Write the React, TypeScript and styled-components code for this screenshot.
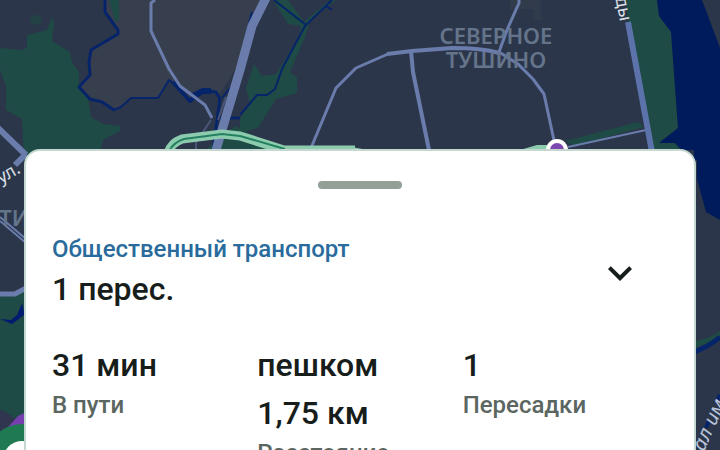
import React, { useState } from 'react';
import styled, { createGlobalStyle } from 'styled-components';

const GlobalStyle = createGlobalStyle`
  * { box-sizing: border-box; }
  body {
    margin: 0;
    background: #2c364a;
    font-family: Roboto, "Noto Sans", sans-serif;
  }
`;

const Screen = styled.main`
  position: relative;
  height: 100vh;
  overflow: hidden;
`;

const MapCanvas = styled.svg`
  position: absolute;
  inset: 0;
  width: 100%;
  height: 100%;
`;

const Sheet = styled.section`
  position: relative;
  margin: 149px 24px 0;
  padding: 30px 26px 32px;
  border: 2px solid #c5d8d0;
  border-radius: 16px;
  background: #fefffe;
`;

const Handle = styled.div`
  width: 84px;
  height: 8px;
  margin: 0 auto 44px;
  border-radius: 4px;
  background: #92a098;
`;

const Header = styled.header`
  display: flex;
  align-items: center;
  justify-content: space-between;
  margin-bottom: 28px;
`;

const Label = styled.div<{ $accent?: boolean }>`
  color: ${(p) => (p.$accent ? '#296b9c' : '#5b6661')};
  font-size: 24px;
  font-weight: 500;
  line-height: 32px;
`;

const Title = styled.h1`
  margin: 0;
  color: #171d1a;
  font-size: 32px;
  font-weight: 500;
  line-height: 48px;
`;

const ToggleButton = styled.button<{ $open: boolean }>`
  display: grid;
  place-items: center;
  width: 96px;
  height: 80px;
  padding: 0;
  border: 0;
  background: none;
  color: #171d1a;
  cursor: pointer;
  svg { transform: ${(p) => (p.$open ? 'none' : 'rotate(180deg)')}; }
`;

const Stats = styled.dl`
  display: grid;
  grid-template-columns: repeat(3, minmax(0, 1fr));
  margin: 0;
`;

const Stat = styled.div`
  display: flex;
  flex-direction: column-reverse;
  justify-content: flex-end;
`;

const StatValue = styled.dd`
  margin: 0;
  color: #171d1a;
  font-size: 32px;
  font-weight: 500;
  line-height: 48px;
`;

const ValueLine = styled.span`
  display: block;
`;

const stats = [
  { value: ['31 мин'], label: 'В пути' },
  { value: ['пешком', '1,75 км'], label: 'Расстояние' },
  { value: ['1'], label: 'Пересадки' },
];

function CityMap() {
  const river = '#06246a';
  const park = '#1e4b45';
  const road = '#6a7cab';
  return (
    <MapCanvas viewBox="0 0 720 450" preserveAspectRatio="xMidYMin slice" aria-label="Карта">
      <rect width="720" height="450" fill="#2c364a" />
      <path fill="#373f4e" d="M105 0L105 12L118 30V34L91 50L89 62L90 75L79 87L90 99L102 103L114 110L121 107L131 98H158L170 80L190 98L200 89L219 95L240 62L264 0Z" />
      <path fill="#323b4c" d="M510 0H541V20H533V9H510Z" />
      <g fill={park}>
        <path d="M0 48L20 50L27 48V35L47 30L52 17L54 24L52 41L70 52L72 62L79 72L79 87L88 98L91 117L103 124L120 126V131L103 140L98 160H24L22 119L6 110V86L0 70Z" />
        <path d="M109 0H119V21H115Z" />
        <ellipse cx="36" cy="20" rx="6" ry="5" opacity="0.6" />
        <path d="M273 0H288L304 22L330 0H336L310 20L305 37L290 72L297 78V93L276 99L258 128L240 133V119L250 103L246 88L254 64L262 76L276 74L299 37L301 26L288 24Z" />
        <path d="M626 0H657L659 16L671 32L678 128L659 143H674L682 150H652L628 22Z" />
        <path d="M565 141L638 122L644 127L574 146Z" />
        <path d="M205 150L235 126L275 146V150Z" />
        <path d="M0 297L24 290V418H0Z" />
        <path d="M690 342Q710 339 720 331V338L690 350Z" />
      </g>
      <path fill="#001b5b" d="M657 0H702L720 48V220L706 212L694 187V150H681L675 143H659L678 128L671 32L659 16Z" />
      <path fill="#2b3547" d="M694 162L697 160V179L706 212L690 200Z" />
      <g fill="none" stroke={river} strokeLinejoin="round">
        <path strokeWidth="3" d="M105 0V12L118 30V34L91 50L89 62L90 75L79 87L90 99L102 102L114 110" />
        <path strokeWidth="2" d="M101 101L114 110L121 107L131 98H158L169 80L178 87" />
        <path strokeWidth="4" d="M173 82L190 101L203 90" />
        <path strokeWidth="3" d="M203 90L216 92L220 99L213 150M218 118H240" />
        <path strokeWidth="6" d="M191 97L203 91L211 91" />
        <path strokeWidth="2" d="M274 0L306 25M332 0L305 26L282 69L275 89L267 95H257L240 115M326 6L332 10M222 98L230 88M252 12L246 36" />
        <path strokeWidth="5" d="M690 354Q710 346 720 337" />
        <path strokeWidth="4" strokeDasharray="7 22" d="M706 428L721 392" />
      </g>
      <path fill="#001b70" d="M0 319L11 320L17 315L22 303L24 312V315L12 324Z" />
      <g fill="none" stroke={road} strokeLinejoin="round">
        <path stroke="#4a5675" strokeWidth="2" d="M211 120L196 142V150M226 97L218 120" />
        <path strokeWidth="3" d="M155 0L151 3V31L169 69L180 86L205 105L212 118" />
        <path strokeWidth="9" d="M267 -4L252 26L240 70L216 150" />
        <path strokeWidth="3" d="M311 148L336 88L356 68L388 54" />
        <path strokeWidth="4" d="M387 54L412 51L452 48Q482 48 499 53" />
        <path strokeWidth="4" d="M411 51L413 72L429 150" />
        <path strokeWidth="3" d="M519 0V3L507 30L499 52" />
        <path strokeWidth="3" d="M499 52L518 64L533 79L544 94L555 145" />
        <path strokeWidth="2" d="M568 147L646 130" />
        <path stroke="#5b72aa" strokeWidth="6" d="M628 22L652 152" />
        <path strokeWidth="6" d="M-2 128L26 155M15 165L26 154" />
        <path strokeWidth="2" d="M0 217L26 239M0 221L26 243" />
        <path strokeWidth="5" d="M0 294H15L26 288" />
      </g>
      <g fill="none" strokeLinejoin="round">
        <path stroke="#8ccbae" strokeWidth="9" d="M168 153Q171 143 182 139L222 134L240 136L284 150H355" />
        <path stroke="#238060" strokeWidth="2" d="M169 151Q174 142 184 139L222 134L240 136L285 149" />
        <path fill="#8ccbae" d="M285 146H346L368 150H285ZM520 150L537 145H550V150Z" />
      </g>
      <circle cx="557" cy="150" r="11" fill="#fff" />
      <circle cx="557" cy="150" r="7" fill="#7c47ae" />
      <path fill="#303650" d="M0 409L12 416L14 427L0 430Z" />
      <path fill="#763fae" d="M8 427L18 416L24 413V430Z" />
      <circle cx="22" cy="460" r="36" fill="#207a51" />
      <circle cx="22" cy="460" r="19" fill="#fff" />
      <g fontFamily="Noto Sans, sans-serif">
        <g fill="#64748a" fontSize="22" fontWeight="600" textAnchor="middle">
          <text x="496" y="44">СЕВЕРНОЕ</text>
          <text x="496" y="68">ТУШИНО</text>
          <text x="14" y="226">ТИ</text>
        </g>
        <g fill="#dce1e8" fontSize="18">
          <text textAnchor="end" transform="translate(620 22) rotate(79)">Свободы</text>
          <text transform="translate(1 184) rotate(-30)">ул.</text>
          <text fill="#b9c4da" fontSize="20" fontStyle="italic" transform="translate(704 452) rotate(-66)">ал им.</text>
        </g>
      </g>
    </MapCanvas>
  );
}

export default function App() {
  const [open, setOpen] = useState(true);
  return (
    <>
      <GlobalStyle />
      <Screen>
        <CityMap />
        <Sheet>
          <Handle />
          <Header>
            <div>
              <Label $accent>Общественный транспорт</Label>
              <Title>1 перес.</Title>
            </div>
            <ToggleButton
              type="button"
              $open={open}
              aria-expanded={open}
              aria-label="Подробности"
              onClick={() => setOpen(!open)}
            >
              <svg width="48" height="48" viewBox="0 0 24 24" fill="currentColor" aria-hidden="true">
                <path d="M7.41 8.59L12 13.17l4.59-4.58L18 10l-6 6-6-6z" />
              </svg>
            </ToggleButton>
          </Header>
          {open && (
            <Stats>
              {stats.map((s) => (
                <Stat key={s.label}>
                  <Label as="dt">{s.label}</Label>
                  <StatValue>
                    {s.value.map((line) => (
                      <ValueLine key={line}>{line}</ValueLine>
                    ))}
                  </StatValue>
                </Stat>
              ))}
            </Stats>
          )}
        </Sheet>
      </Screen>
    </>
  );
}
